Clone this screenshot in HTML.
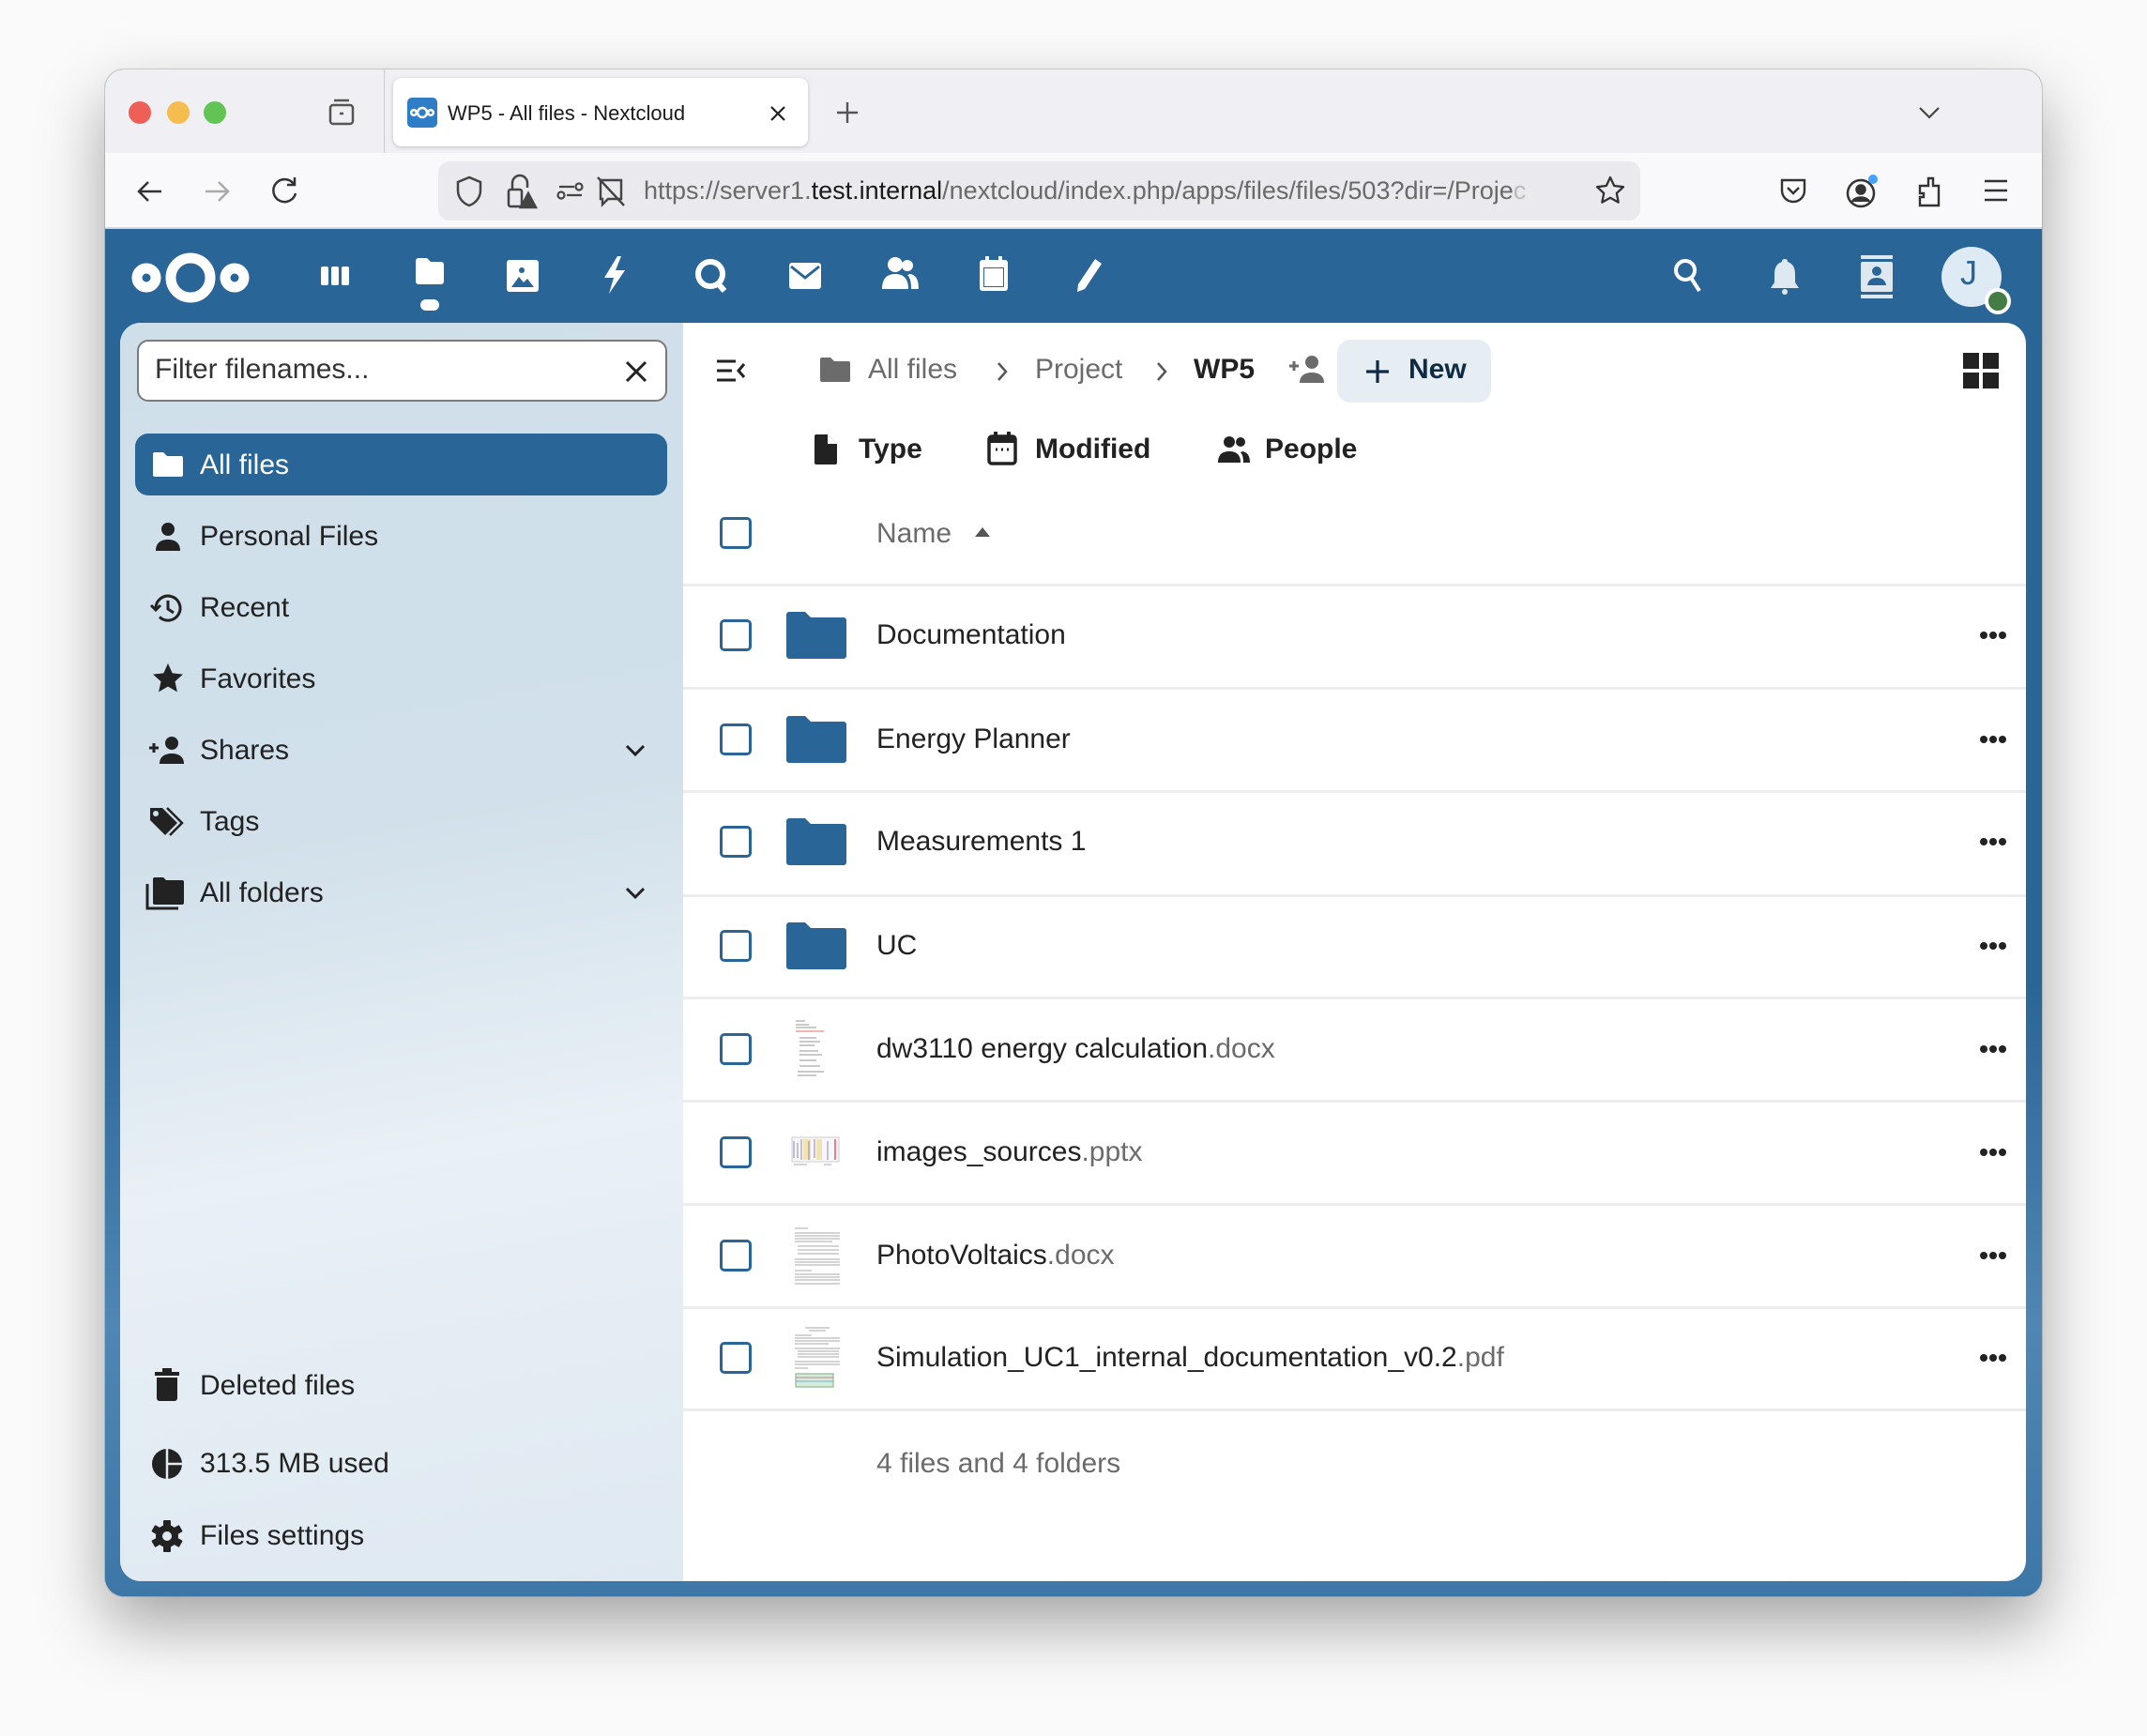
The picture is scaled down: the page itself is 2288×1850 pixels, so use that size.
<!DOCTYPE html>
<html><head><meta charset="utf-8">
<style>
*{box-sizing:border-box;margin:0;padding:0}
html,body{width:2288px;height:1850px;background:#fafafa;overflow:hidden;font-family:"Liberation Sans",sans-serif;color:#222}
.a{position:absolute}
#win{left:112px;top:74px;width:2064px;height:1627px;border-radius:20px;overflow:hidden;box-shadow:0 30px 70px rgba(0,0,0,.35),0 0 0 1px rgba(0,0,0,.15);background:#2a6598}
.t{white-space:nowrap}
.ic{position:absolute}
.nav{position:absolute;left:213px;font-size:30px;color:#222;transform:translateY(-50%)}
.row-sep{position:absolute;left:728px;width:1431px;height:3px;background:#ededed}
.cb{position:absolute;left:767px;width:34px;height:34px;border:3.5px solid #2a6598;border-radius:5px;background:#fff}
.fname{position:absolute;left:934px;font-size:30px;color:#222;transform:translateY(-50%);white-space:nowrap}
.ext{color:#6b6b6b}
.dots{position:absolute;left:2110px;width:30px;height:8px}
.dots i{position:absolute;top:0;width:8px;height:8px;border-radius:50%;background:#222}
</style></head><body>
<div id="win" class="a">
 <div class="a" style="left:0;top:0;width:2064px;height:89px;background:#f0f0f4"></div>
 <div class="a" style="left:25px;top:34px;width:24px;height:24px;border-radius:50%;background:#ee5f57"></div>
 <div class="a" style="left:66px;top:34px;width:24px;height:24px;border-radius:50%;background:#f5bd4f"></div>
 <div class="a" style="left:105px;top:34px;width:24px;height:24px;border-radius:50%;background:#61c454"></div>
 <svg class="a" style="left:236px;top:30px" width="32" height="32" viewBox="0 0 32 32" fill="none" stroke="#555" stroke-width="2.5"><rect x="4" y="8" width="24" height="20" rx="3"/><path d="M8 3h16M14 17h4"/></svg>
 <div class="a" style="left:297px;top:0;width:1px;height:89px;background:#ccc"></div>
 <div class="a" style="left:307px;top:9px;width:442px;height:73px;background:#fff;border-radius:9px;box-shadow:0 1px 4px rgba(0,0,0,.2)"></div>
 <div class="a" style="left:322px;top:30px;width:32px;height:32px;background:#2f7dc6;border-radius:5px"></div>
 <svg class="a" style="left:322px;top:30px" width="32" height="32" viewBox="0 0 32 32" fill="none" stroke="#fff" stroke-width="2.5"><circle cx="16" cy="16" r="5"/><circle cx="7" cy="16" r="2.8"/><circle cx="25" cy="16" r="2.8"/></svg>
 <div class="a t" style="left:365px;top:34px;font-size:22px;color:#1b1b1b">WP5 - All files - Nextcloud</div>
 <svg class="a" style="left:707px;top:37px" width="20" height="20" viewBox="0 0 20 20" stroke="#222" stroke-width="2.2"><path d="M3 3l14 14M17 3L3 17"/></svg>
 <svg class="a" style="left:778px;top:33px" width="26" height="26" viewBox="0 0 26 26" stroke="#555" stroke-width="2.4"><path d="M13 2v22M2 13h22"/></svg>
 <svg class="a" style="left:1932px;top:38px" width="24" height="16" viewBox="0 0 24 16" fill="none" stroke="#444" stroke-width="2.2"><path d="M2 3l10 10 10-10"/></svg>
 <div class="a" style="left:0;top:89px;width:2064px;height:81px;background:#f9f9fb;border-bottom:2px solid #d6d6d9"></div>
 <svg class="a" style="left:32px;top:114px" width="32" height="32" viewBox="0 0 32 32" fill="none" stroke="#333" stroke-width="2.5"><path d="M28 16H5M14 6L4 16l10 10"/></svg>
 <svg class="a" style="left:103px;top:114px" width="32" height="32" viewBox="0 0 32 32" fill="none" stroke="#aaa" stroke-width="2.5"><path d="M4 16h23M18 6l10 10-10 10"/></svg>
 <svg class="a" style="left:174px;top:112px" width="34" height="34" viewBox="0 0 34 34" fill="none" stroke="#333" stroke-width="2.5"><path d="M27 10A12 12 0 1 0 29 20"/><path d="M28 3v8h-8"/></svg>
 <div class="a" style="left:355px;top:98px;width:1281px;height:63px;background:#eaeaee;border-radius:12px"></div>
 <svg class="a" style="left:372px;top:112px" width="32" height="36" viewBox="0 0 32 36" fill="none" stroke="#444" stroke-width="2.5"><path d="M16 3L4 8v9c0 8 6 14 12 16 6-2 12-8 12-16V8z"/></svg>
 <svg class="a" style="left:425px;top:110px" width="36" height="40" viewBox="0 0 36 40" fill="none" stroke="#444" stroke-width="2.5"><path d="M9 18v-7a8 8 0 0 1 16 0v5"/><rect x="5" y="18" width="14" height="18" rx="2"/><path d="M26 22l-8 15h16z" fill="#444"/></svg>
 <svg class="a" style="left:480px;top:118px" width="32" height="24" viewBox="0 0 32 24" fill="none" stroke="#444" stroke-width="2.2"><circle cx="6" cy="16" r="3.5"/><path d="M12 16h16M4 7h16"/><circle cx="25" cy="7" r="3.5"/></svg>
 <svg class="a" style="left:522px;top:112px" width="34" height="36" viewBox="0 0 34 36" fill="none" stroke="#444" stroke-width="2.4"><path d="M6 6h22v20H14l-6 6v-6H6z"/><path d="M3 3l28 30"/></svg>
 <div class="a t" style="left:574px;top:114px;font-size:27px;color:#6a6a6a">https://server1.<span style="color:#1b1b1b">test.internal</span>/nextcloud/index.php/apps/files/files/503?dir=/Proje<span style="color:#bbb">c</span></div>
 <svg class="a" style="left:1587px;top:112px" width="34" height="34" viewBox="0 0 34 34" fill="none" stroke="#333" stroke-width="2.3" stroke-linejoin="round"><path d="M17 3l4.2 9 9.8 1.2-7.2 6.7 1.9 9.7L17 24.8l-8.7 4.8 1.9-9.7L3 13.2 12.8 12z"/></svg>
 <svg class="a" style="left:1784px;top:114px" width="30" height="32" viewBox="0 0 30 32" fill="none" stroke="#333" stroke-width="2.4"><path d="M3 4h24v11a12 12 0 0 1-24 0z"/><path d="M9 12l6 6 6-6"/></svg>
 <svg class="a" style="left:1854px;top:110px" width="40" height="40" viewBox="0 0 40 40" fill="none" stroke="#333" stroke-width="2.5"><circle cx="17" cy="22" r="14"/><circle cx="17" cy="18" r="4.5" fill="#333"/><path d="M8 31c3-6 15-6 18 0" fill="#333"/><circle cx="30" cy="7" r="5" fill="#45a1ff" stroke="none"/></svg>
 <svg class="a" style="left:1929px;top:112px" width="30" height="36" viewBox="0 0 30 36" fill="none" stroke="#333" stroke-width="2.4"><path d="M14 4v8H5v8h4v4H5v9h20V12h-6V4z"/></svg>
 <svg class="a" style="left:2001px;top:116px" width="28" height="26" viewBox="0 0 28 26" stroke="#333" stroke-width="2.6"><path d="M2 3h24M2 13h24M2 23h24"/></svg>
 <div class="a" style="left:0;top:170px;width:2064px;height:1457px;background:linear-gradient(180deg,#2a6598 0%,#2a6598 55%,#4f86b4 80%,#3d77a8 100%)"></div>
 <svg class="a" style="left:27px;top:190px" width="128" height="64" viewBox="0 0 128 64" fill="none" stroke="#fff" stroke-width="11"><circle cx="64" cy="32" r="21"/><circle cx="17" cy="32" r="10"/><circle cx="111" cy="32" r="10"/></svg>
 <svg class="a" style="left:229px;top:206px" width="32" height="28" viewBox="0 0 32 28" fill="#fff"><rect x="1" y="4" width="8" height="20" rx="2"/><rect x="12" y="4" width="8" height="20" rx="2"/><rect x="23" y="4" width="8" height="20" rx="2"/></svg>
 <svg class="a" style="left:328px;top:200px" width="36" height="32" viewBox="0 0 36 32" fill="#fff"><path d="M3 4a3 3 0 0 1 3-3h9l4 4h11a3 3 0 0 1 3 3v18a3 3 0 0 1-3 3H6a3 3 0 0 1-3-3z"/></svg>
 <div class="a" style="left:336px;top:245px;width:20px;height:12px;border-radius:6px;background:#fff"></div>
 <svg class="a" style="left:427px;top:202px" width="36" height="36" viewBox="0 0 36 36"><rect x="1" y="1" width="34" height="34" rx="3" fill="#fff"/><path d="M6 30l8-11 5 6 4-4 7 9z" fill="#2a6598"/><circle cx="17" cy="12" r="3" fill="#2a6598"/></svg>
 <svg class="a" style="left:528px;top:198px" width="30" height="42" viewBox="0 0 30 42" fill="#fff"><path d="M18 1L4 24h10l-5 17 17-25H16l6-15z"/></svg>
 <svg class="a" style="left:627px;top:200px" width="38" height="40" viewBox="0 0 38 40" fill="none" stroke="#fff" stroke-width="6"><circle cx="18" cy="18" r="13"/><path d="M26 28l7 8"/></svg>
 <svg class="a" style="left:728px;top:204px" width="36" height="32" viewBox="0 0 36 32"><rect x="1" y="2" width="34" height="28" rx="3" fill="#fff"/><path d="M3 6l15 12 15-12" fill="none" stroke="#2a6598" stroke-width="3"/></svg>
 <svg class="a" style="left:826px;top:198px" width="42" height="38" viewBox="0 0 42 38" fill="#fff"><circle cx="16" cy="10" r="8"/><path d="M2 36c0-12 6-16 14-16s14 4 14 16z"/><circle cx="29" cy="11" r="6"/><path d="M32 20c6 1 9 6 9 16h-8c0-7-1-12-4-15z"/></svg>
 <svg class="a" style="left:930px;top:198px" width="34" height="40" viewBox="0 0 34 40"><rect x="2" y="5" width="30" height="33" rx="3" fill="#fff"/><rect x="6" y="13" width="22" height="21" fill="#2a6598"/><rect x="7" y="14" width="20" height="19" fill="#fff"/><rect x="8" y="1" width="4" height="8" fill="#fff"/><rect x="22" y="1" width="4" height="8" fill="#fff"/></svg>
 <svg class="a" style="left:1030px;top:200px" width="34" height="38" viewBox="0 0 34 38" fill="#fff"><path d="M25 2l7 5-18 27-8 3 1-8z"/></svg>
 <svg class="a" style="left:1670px;top:200px" width="34" height="40" viewBox="0 0 34 40" fill="none" stroke="#fff" stroke-width="4"><circle cx="14" cy="14" r="10"/><path d="M20 22l9 14"/></svg>
 <svg class="a" style="left:1773px;top:200px" width="34" height="42" viewBox="0 0 34 42" fill="#dde8f1"><path d="M17 2c2 0 3 1 3 3 6 2 8 7 8 13v9l4 6H2l4-6v-9c0-6 2-11 8-13 0-2 1-3 3-3z"/><circle cx="17" cy="37" r="3"/></svg>
 <svg class="a" style="left:1868px;top:198px" width="40" height="46" viewBox="0 0 40 46"><rect x="3" y="0" width="34" height="4" fill="#dde8f1"/><rect x="3" y="42" width="34" height="4" fill="#dde8f1"/><rect x="3" y="7" width="34" height="32" rx="2" fill="#dde8f1"/><circle cx="20" cy="17" r="5" fill="#2a6598"/><path d="M10 32c1-6 5-8 10-8s9 2 10 8z" fill="#2a6598"/></svg>
 <div class="a" style="left:1957px;top:189px;width:64px;height:64px;border-radius:50%;background:#deebf5"></div>
 <div class="a" style="left:1977px;top:196px;font-size:36px;color:#2a6598">J</div>
 <div class="a" style="left:2003px;top:233px;width:28px;height:28px;border-radius:50%;background:#437c44;border:4px solid #fff"></div>
 <div class="a" style="left:16px;top:270px;width:2031px;height:1341px;border-radius:22px;overflow:hidden;background:#fff">
  <div class="a" style="left:0;top:0;width:600px;height:1341px;background:linear-gradient(170deg,#cfdfea 0%,#d1e0ea 40%,#e9f0f6 65%,#e3ecf3 85%,#dfe9f2 100%)"></div>
 </div>
 <div class="a" style="left:34px;top:288px;width:565px;height:66px;background:#fff;border:2px solid #7a7a7a;border-radius:12px"></div>
 <div class="a t" style="left:53px;top:303px;font-size:30px;color:#333">Filter filenames...</div>
 <svg class="a" style="left:553px;top:309px" width="26" height="26" viewBox="0 0 26 26" stroke="#222" stroke-width="3"><path d="M3 3l20 20M23 3L3 23"/></svg>
 <div class="a" style="left:32px;top:388px;width:567px;height:66px;background:#2a6598;border-radius:14px"></div>
 <svg class="a" style="left:50px;top:407px" width="34" height="28" viewBox="0 0 34 28" fill="#fff"><path d="M1 3a2 2 0 0 1 2-2h9l4 4h15a2 2 0 0 1 2 2v18a2 2 0 0 1-2 2H3a2 2 0 0 1-2-2z"/></svg>
 <div class="nav t" style="left:101px;top:422px;color:#fff">All files</div>
 <svg class="a" style="left:52px;top:482px" width="30" height="32" viewBox="0 0 30 32" fill="#222"><circle cx="15" cy="8" r="7"/><path d="M2 31c0-9 6-12 13-12s13 3 13 12z"/></svg>
 <div class="nav t" style="left:101px;top:498px">Personal Files</div>
 <svg class="a" style="left:48px;top:556px" width="36" height="36" viewBox="0 0 36 36" fill="none" stroke="#222" stroke-width="3"><path d="M6 18a13 13 0 1 1 4 9.5"/><path d="M1 15l5 5 5-5"/><path d="M19 10v9l6 4"/></svg>
 <div class="nav t" style="left:101px;top:574px">Recent</div>
 <svg class="a" style="left:50px;top:632px" width="34" height="34" viewBox="0 0 34 34" fill="#222"><path d="M17 1l4.7 10.4 11.3 1.2-8.5 7.6 2.4 11.2L17 25.6 7.1 31.4l2.4-11.2L1 12.6l11.3-1.2z"/></svg>
 <div class="nav t" style="left:101px;top:650px">Favorites</div>
 <svg class="a" style="left:45px;top:710px" width="42" height="32" viewBox="0 0 42 32" fill="#222"><path d="M2 13h10M7 8v10" stroke="#222" stroke-width="3"/><circle cx="26" cy="8" r="7"/><path d="M13 30c0-8 6-11 13-11s13 3 13 11z"/></svg>
 <div class="nav t" style="left:101px;top:726px">Shares</div>
 <svg class="a" style="left:553px;top:718px" width="24" height="16" viewBox="0 0 24 16" fill="none" stroke="#222" stroke-width="3"><path d="M3 3l9 9 9-9"/></svg>
 <svg class="a" style="left:45px;top:784px" width="40" height="36" viewBox="0 0 40 36"><path d="M3 3h13l16 16-13 13L3 16z" fill="#222"/><circle cx="9" cy="9" r="3" fill="#d0e0ea"/><path d="M21 3l16 16-13 13" fill="none" stroke="#222" stroke-width="2.5"/></svg>
 <div class="nav t" style="left:101px;top:802px">Tags</div>
 <svg class="a" style="left:43px;top:860px" width="42" height="38" viewBox="0 0 42 38" fill="#222"><path d="M8 3a2 2 0 0 1 2-2h9l3 3h17a2 2 0 0 1 2 2v22a2 2 0 0 1-2 2H10a2 2 0 0 1-2-2z"/><path d="M2 8v26h33" fill="none" stroke="#222" stroke-width="3"/></svg>
 <div class="nav t" style="left:101px;top:878px">All folders</div>
 <svg class="a" style="left:553px;top:870px" width="24" height="16" viewBox="0 0 24 16" fill="none" stroke="#222" stroke-width="3"><path d="M3 3l9 9 9-9"/></svg>
 <svg class="a" style="left:52px;top:1384px" width="28" height="36" viewBox="0 0 28 36" fill="#222"><rect x="1" y="4" width="26" height="4"/><rect x="9" y="0" width="10" height="4"/><path d="M3 10h22v22a3 3 0 0 1-3 3H6a3 3 0 0 1-3-3z"/></svg>
 <div class="nav t" style="left:101px;top:1403px">Deleted files</div>
 <svg class="a" style="left:48px;top:1468px" width="36" height="36" viewBox="0 0 36 36"><circle cx="18" cy="18" r="16" fill="#222"/><path d="M18 2v34M18 18h16" stroke="#e2ebf3" stroke-width="2.5"/></svg>
 <div class="nav t" style="left:101px;top:1486px">313.5 MB used</div>
 <svg class="a" style="left:48px;top:1545px" width="36" height="36" viewBox="0 0 36 36"><g fill="#222"><circle cx="18" cy="18" r="12"/><rect x="14" y="1" width="8" height="34" rx="1"/><rect x="14" y="1" width="8" height="34" rx="1" transform="rotate(60 18 18)"/><rect x="14" y="1" width="8" height="34" rx="1" transform="rotate(-60 18 18)"/></g><circle cx="18" cy="18" r="5" fill="#e0e9f1"/></svg>
 <div class="nav t" style="left:101px;top:1563px">Files settings</div>

 <svg class="a" style="left:651px;top:308px" width="32" height="26" viewBox="0 0 32 26" fill="none" stroke="#222" stroke-width="3"><path d="M1 3h20M1 13h16M1 23h20M30 6l-6 7 6 7"/></svg>
 <svg class="a" style="left:761px;top:306px" width="34" height="28" viewBox="0 0 34 28" fill="#6b6b6b"><path d="M1 3a2 2 0 0 1 2-2h9l4 4h15a2 2 0 0 1 2 2v18a2 2 0 0 1-2 2H3a2 2 0 0 1-2-2z"/></svg>
 <div class="a t" style="left:813px;top:303px;font-size:30px;color:#6b6b6b">All files</div>
 <svg class="a" style="left:949px;top:310px" width="14" height="24" viewBox="0 0 14 24" fill="none" stroke="#555" stroke-width="2.5"><path d="M3 3l8 9-8 9"/></svg>
 <div class="a t" style="left:991px;top:303px;font-size:30px;color:#6b6b6b">Project</div>
 <svg class="a" style="left:1119px;top:310px" width="14" height="24" viewBox="0 0 14 24" fill="none" stroke="#555" stroke-width="2.5"><path d="M3 3l8 9-8 9"/></svg>
 <div class="a t" style="left:1160px;top:303px;font-size:30px;color:#222;font-weight:bold">WP5</div>
 <svg class="a" style="left:1260px;top:304px" width="42" height="32" viewBox="0 0 42 32" fill="#6b6b6b"><path d="M2 12h10M7 7v10" stroke="#6b6b6b" stroke-width="3"/><circle cx="26" cy="8" r="7"/><path d="M13 30c0-8 6-11 13-11s13 3 13 11z"/></svg>
 <div class="a" style="left:1313px;top:288px;width:164px;height:67px;background:#e6eef4;border-radius:14px"></div>
 <svg class="a" style="left:1342px;top:308px" width="28" height="28" viewBox="0 0 28 28" stroke="#0f2b44" stroke-width="3.2"><path d="M14 2v24M2 14h24"/></svg>
 <div class="a t" style="left:1389px;top:303px;font-size:30px;color:#0f2b44;font-weight:bold">New</div>
 <svg class="a" style="left:1980px;top:302px" width="38" height="38" viewBox="0 0 38 38" fill="#222"><rect x="0" y="0" width="17" height="17"/><rect x="21" y="0" width="17" height="17"/><rect x="0" y="21" width="17" height="17"/><rect x="21" y="21" width="17" height="17"/></svg>
 <svg class="a" style="left:755px;top:388px" width="26" height="34" viewBox="0 0 26 34" fill="#222"><path d="M3 1h12l10 10v20a2 2 0 0 1-2 2H3a2 2 0 0 1-2-2V3a2 2 0 0 1 2-2z"/><path d="M15 1v10h10" fill="#fff"/></svg>
 <div class="a t" style="left:803px;top:388px;font-size:30px;font-weight:bold">Type</div>
 <svg class="a" style="left:940px;top:386px" width="32" height="36" viewBox="0 0 32 36"><rect x="2" y="5" width="28" height="29" rx="3" fill="none" stroke="#222" stroke-width="3.5"/><rect x="2" y="5" width="28" height="7" fill="#222"/><rect x="7" y="0" width="4" height="8" fill="#222"/><rect x="21" y="0" width="4" height="8" fill="#222"/><path d="M9 19h2M15 19h2M21 19h2" stroke="#222" stroke-width="3"/></svg>
 <div class="a t" style="left:991px;top:388px;font-size:30px;font-weight:bold">Modified</div>
 <svg class="a" style="left:1185px;top:390px" width="36" height="30" viewBox="0 0 36 30" fill="#222"><circle cx="13" cy="7" r="6"/><path d="M1 29c0-9 5-12 12-12s12 3 12 12z"/><circle cx="25" cy="7" r="5"/><path d="M27 17c5 1 8 4 8 12h-7c0-5-1-9-3-11z"/></svg>
 <div class="a t" style="left:1236px;top:388px;font-size:30px;font-weight:bold">People</div>
 <div class="cb" style="left:655px;top:477px"></div>
 <div class="a t" style="left:822px;top:478px;font-size:30px;color:#6b6b6b">Name</div>
 <svg class="a" style="left:925px;top:486px" width="20" height="14" viewBox="0 0 20 14" fill="#555"><path d="M10 2l8 10H2z"/></svg>
 <div class="row-sep" style="left:616px;top:548px"></div>
 <div class="row-sep" style="left:616px;top:658px"></div>
 <div class="row-sep" style="left:616px;top:768px"></div>
 <div class="row-sep" style="left:616px;top:879px"></div>
 <div class="row-sep" style="left:616px;top:988px"></div>
 <div class="row-sep" style="left:616px;top:1098px"></div>
 <div class="row-sep" style="left:616px;top:1208px"></div>
 <div class="row-sep" style="left:616px;top:1318px"></div>
 <div class="row-sep" style="left:616px;top:1427px"></div>
</div>

<div class="a" style="left:0;top:0">
 <div class="cb" style="top:660px"></div>
 <div class="cb" style="top:771px"></div>
 <div class="cb" style="top:880px"></div>
 <div class="cb" style="top:991px"></div>
 <div class="cb" style="top:1101px"></div>
 <div class="cb" style="top:1211px"></div>
 <div class="cb" style="top:1321px"></div>
 <div class="cb" style="top:1430px"></div>

 <svg class="ic" style="left:838px;top:652px" width="64" height="50" viewBox="0 0 64 50" fill="#2a6598"><path d="M0 3a3 3 0 0 1 3-3h17l6 6h35a3 3 0 0 1 3 3v38a3 3 0 0 1-3 3H3a3 3 0 0 1-3-3z"/></svg>
 <svg class="ic" style="left:838px;top:763px" width="64" height="50" viewBox="0 0 64 50" fill="#2a6598"><path d="M0 3a3 3 0 0 1 3-3h17l6 6h35a3 3 0 0 1 3 3v38a3 3 0 0 1-3 3H3a3 3 0 0 1-3-3z"/></svg>
 <svg class="ic" style="left:838px;top:872px" width="64" height="50" viewBox="0 0 64 50" fill="#2a6598"><path d="M0 3a3 3 0 0 1 3-3h17l6 6h35a3 3 0 0 1 3 3v38a3 3 0 0 1-3 3H3a3 3 0 0 1-3-3z"/></svg>
 <svg class="ic" style="left:838px;top:983px" width="64" height="50" viewBox="0 0 64 50" fill="#2a6598"><path d="M0 3a3 3 0 0 1 3-3h17l6 6h35a3 3 0 0 1 3 3v38a3 3 0 0 1-3 3H3a3 3 0 0 1-3-3z"/></svg>

 <svg class="ic" style="left:846px;top:1084px" width="40" height="66" viewBox="0 0 40 66" stroke="#aaa" stroke-width="1.2"><path d="M2 4h10M2 8h14M2 11h22" /><path d="M2 15h30" stroke="#e88"/><path d="M6 22h18M6 26h22M6 30h16M6 36h20M6 40h24M6 46h18M6 52h22M4 58h28M4 62h20"/></svg>
 <svg class="ic" style="left:842px;top:1210px" width="54" height="36" viewBox="0 0 54 36"><rect x="2" y="2" width="50" height="26" fill="#f7f7fb" stroke="#ccc" stroke-width="1"/><rect x="14" y="4" width="8" height="22" fill="#f3e3b4"/><rect x="28" y="4" width="6" height="22" fill="#f3e3b4"/><path d="M4 6v18M8 8v16M12 4v22M20 6v20M26 4v20M40 6v20" stroke="#88a" stroke-width="1"/><path d="M48 4v22" stroke="#d33" stroke-width="1.2"/><path d="M4 31h14M36 31h8" stroke="#aaa"/></svg>
 <svg class="ic" style="left:844px;top:1306px" width="54" height="66" viewBox="0 0 54 66" stroke="#bbb" stroke-width="1.3"><path d="M3 3h14M3 8h48M3 11h48M3 14h48M3 17h40M6 22h44M6 26h44M6 30h44M3 36h48M3 39h48M3 42h48M3 48h18M3 52h48M3 55h48M3 58h48M3 62h48"/></svg>
 <svg class="ic" style="left:844px;top:1412px" width="54" height="70" viewBox="0 0 54 70" stroke="#bbb" stroke-width="1.3"><path d="M14 3h26M18 6h18M3 11h18M3 14h48M3 17h48M3 20h36M3 25h48M6 28h44M6 31h44M6 34h44M3 39h48M3 42h48M3 46h14"/><rect x="4" y="52" width="40" height="14" fill="#d4ecd9" stroke="#9b9"/><path d="M4 56h40" stroke="#c9a"/><path d="M4 60h40" stroke="#8bc"/></svg>

 <div class="fname" style="top:677px">Documentation</div>
 <div class="fname" style="top:788px">Energy Planner</div>
 <div class="fname" style="top:897px">Measurements 1</div>
 <div class="fname" style="top:1008px">UC</div>
 <div class="fname" style="top:1118px">dw3110 energy calculation<span class="ext">.docx</span></div>
 <div class="fname" style="top:1228px">images_sources<span class="ext">.pptx</span></div>
 <div class="fname" style="top:1338px">PhotoVoltaics<span class="ext">.docx</span></div>
 <div class="fname" style="top:1447px">Simulation_UC1_internal_documentation_v0.2<span class="ext">.pdf</span></div>
 <div class="fname" style="top:1560px;color:#6b6b6b">4 files and 4 folders</div>

 <div class="dots" style="top:673px"><i style="left:0"></i><i style="left:10px"></i><i style="left:20px"></i></div>
 <div class="dots" style="top:784px"><i style="left:0"></i><i style="left:10px"></i><i style="left:20px"></i></div>
 <div class="dots" style="top:893px"><i style="left:0"></i><i style="left:10px"></i><i style="left:20px"></i></div>
 <div class="dots" style="top:1004px"><i style="left:0"></i><i style="left:10px"></i><i style="left:20px"></i></div>
 <div class="dots" style="top:1114px"><i style="left:0"></i><i style="left:10px"></i><i style="left:20px"></i></div>
 <div class="dots" style="top:1224px"><i style="left:0"></i><i style="left:10px"></i><i style="left:20px"></i></div>
 <div class="dots" style="top:1334px"><i style="left:0"></i><i style="left:10px"></i><i style="left:20px"></i></div>
 <div class="dots" style="top:1443px"><i style="left:0"></i><i style="left:10px"></i><i style="left:20px"></i></div>
</div>
</body></html>
